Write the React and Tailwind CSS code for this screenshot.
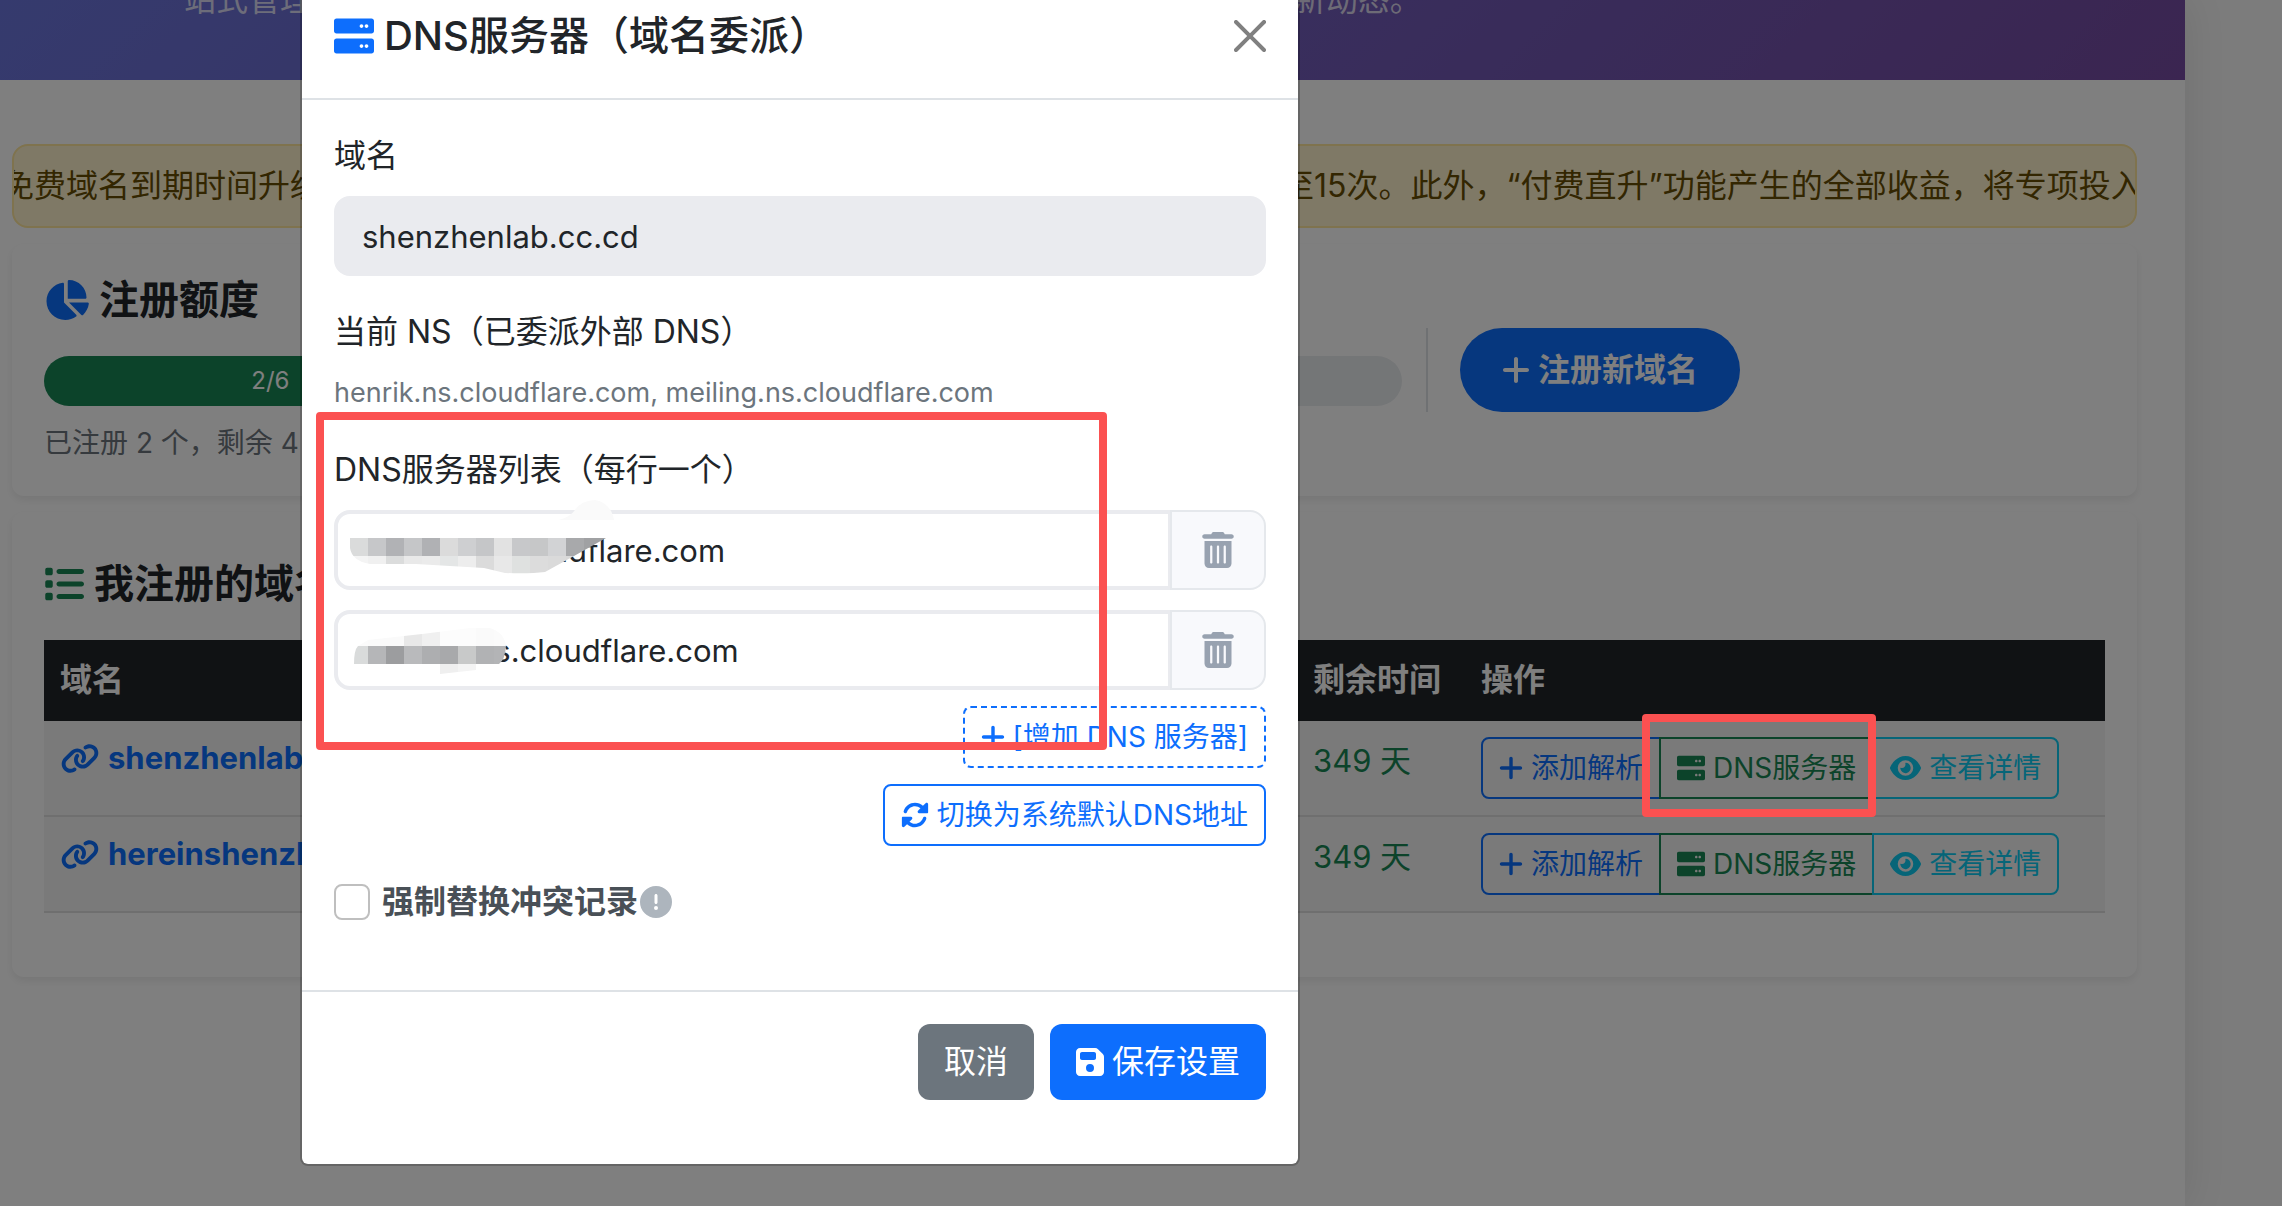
import React, { useState } from 'react';
import {
  FaChartPie,
  FaCircleExclamation,
  FaEye,
  FaFloppyDisk,
  FaLink,
  FaList,
  FaPlus,
  FaTrashCan,
} from 'react-icons/fa6';

const domains = [
  { name: 'shenzhenlab.cc.cd', remaining: '349 天' },
  { name: 'hereinshenzhen.cc.cd', remaining: '349 天' },
];

const quota = { used: 2, total: 6 };

// Pixelated strip over the first name server
const mosaicOne = {
  top: ['#dadbdb', '#c6c7c9', '#b1b2b5', '#c5c6c8', '#b0b1b4', '#dbdbdb', '#cecfd1', '#c5c6c8', '#e2e2e2', '#c7c8ca', '#c6c7c8', '#d2d3d5', '#a8a9ab', '#a0a1a3', '#a0a1a3'],
  bottom: ['#f4f4f4', '#f0f0f0', '#dbdcdc', '#e9e9e9', '#ebebeb', '#e4e6e6', '#ededed', '#dbdbdb', '#e8e8e8', '#dfe1e0', '#dcdcdc', '#dadada', '#d8d8d8'],
};

// Pixelated strip over the second name server
const mosaicTwo = {
  top: ['#fbfbfb', '#fafafa', '#fafafa', '#e8e8e8', '#f0f0f0', '#fcfcfc', '#fcfcfc', '#fafafa', '#fbfbfb'],
  middle: ['#d9dbdb', '#b5b6b8', '#9c9d9f', '#b9babc', '#adaeb0', '#a8a9ab', '#c8c9c9', '#b1b2b4', '#b3b4b6'],
};

const ServerIcon = ({ className }) => (
  <svg className={className} width="1em" height="1em" viewBox="0 0 512 512" fill="currentColor" aria-hidden="true">
    <path d="M480 288H32c-17.62 0-32 14.38-32 32v128c0 17.62 14.38 32 32 32h448c17.62 0 32-14.38 32-32V320c0-17.62-14.38-32-32-32zM352 408c-13.25 0-24-10.75-24-24s10.75-24 24-24 24 10.75 24 24-10.75 24-24 24zm64 0c-13.25 0-24-10.75-24-24s10.75-24 24-24 24 10.75 24 24-10.75 24-24 24zM480 32H32C14.38 32 0 46.38 0 64v128c0 17.62 14.38 32 32 32h448c17.62 0 32-14.38 32-32V64c0-17.62-14.38-32-32-32zM352 152c-13.25 0-24-10.75-24-24s10.75-24 24-24 24 10.75 24 24-10.75 24-24 24zm64 0c-13.25 0-24-10.75-24-24s10.75-24 24-24 24 10.75 24 24-10.75 24-24 24z" />
  </svg>
);

const RotateIcon = () => (
  <svg width="1em" height="1em" viewBox="0 0 512 512" fill="currentColor" aria-hidden="true">
    <path d="M449.9 39.96l-48.5 48.53C362.5 53.19 311.4 32 256 32C161.5 32 78.59 92.34 49.58 182.2c-5.438 16.81 3.797 34.88 20.61 40.28c16.97 5.5 34.86-3.812 40.3-20.59C130.9 138.5 189.4 96 256 96c37.96 0 73 14.18 100.2 37.8L311.1 178C295.1 194.8 306.8 223.4 330.4 224h146.9C487.7 223.7 496 215.3 496 204.9V59.04C496 34.99 466.9 22.95 449.9 39.96zM441.8 289.6c-16.94-5.438-34.88 3.812-40.3 20.59C381.1 373.5 322.6 416 256 416c-37.96 0-73-14.18-100.2-37.8L200 334C216.9 317.2 205.2 288.6 181.6 288H34.66C24.32 288.3 16 296.7 16 307.1v145.9c0 24.04 29.07 36.08 46.07 19.07l48.5-48.53C149.5 458.8 200.6 480 255.1 480c94.45 0 177.4-60.34 206.4-150.2C467.9 313 458.6 294.1 441.8 289.6z" />
  </svg>
);

const MosaicOne = () => (
  <svg className="pointer-events-none absolute -top-2.5 left-0" width="300" height="90" viewBox="0 0 300 90" aria-hidden="true">
    <clipPath id="mosaic-one">
      <path d="M16 38H272L240 56L211 72Q195 74 171 73L150 68L116 66L82 64H36Q18 61 16 48Z" />
    </clipPath>
    <path d="M225 20Q236 17 241 10Q248 0 261 0Q277 3 280 20Z" fill="#fafafa" />
    <g clipPath="url(#mosaic-one)">
      {mosaicOne.top.map((color, index) => (
        <rect key={index} x={16 + index * 18} y="38" width="18" height="18" fill={color} />
      ))}
      {mosaicOne.bottom.map((color, index) => (
        <rect key={index} x={16 + index * 18} y="56" width="18" height="18" fill={color} />
      ))}
    </g>
  </svg>
);

const MosaicTwo = () => (
  <svg className="pointer-events-none absolute -top-2.5 left-0" width="300" height="90" viewBox="0 0 300 90" aria-hidden="true">
    <clipPath id="mosaic-two">
      <path d="M20 64Q20 50 24 46L34 40L88 34L136 28H156Q170 32 172 46Q171 60 165 64L142 70L106 74V64Z" />
    </clipPath>
    <g clipPath="url(#mosaic-two)">
      {mosaicTwo.top.map((color, index) => (
        <rect key={index} x={16 + index * 18} y="28" width="18" height="18" fill={color} />
      ))}
      {mosaicTwo.middle.map((color, index) => (
        <rect key={index} x={16 + index * 18} y="46" width="18" height="18" fill={color} />
      ))}
      <rect x="106" y="64" width="18" height="10" fill="#efefef" />
      <rect x="124" y="64" width="18" height="10" fill="#f4f4f4" />
    </g>
  </svg>
);

const DomainRow = ({ domain }) => (
  <tr className="border-b-2 border-[#dedede] bg-[#f5f5f5] align-top">
    <td className="px-4 py-4">
      <a href="#domain" className="flex items-center gap-2 text-[31px] leading-[42px] font-bold text-[#0d6efd]">
        <FaLink className="w-10" />
        {domain.name}
      </a>
    </td>
    <td className="px-4 py-4 text-[31px] text-[#198754]">{domain.remaining}</td>
    <td className="px-4 py-4">
      <div className="flex text-[28px] leading-[42px]">
        <button className="flex items-center gap-2 rounded-l-lg border-2 border-[#0d6efd] px-4 py-2 text-[#0d6efd]">
          <FaPlus className="w-6" />
          添加解析
        </button>
        <button className="-ml-0.5 flex items-center gap-2 border-2 border-[#198754] px-4 py-2 text-[#198754]">
          <ServerIcon />
          DNS服务器
        </button>
        <button className="-ml-0.5 flex items-center gap-2 rounded-r-lg border-2 border-[#0dcaf0] px-4 py-2 text-[#0dcaf0]">
          <FaEye className="w-[31px]" />
          查看详情
        </button>
      </div>
    </td>
  </tr>
);

const ServerInput = ({ id, value, onChange, children }) => (
  <div className="relative mb-5 flex">
    <input
      id={id}
      type="text"
      aria-label="DNS服务器"
      className="h-20 min-w-0 flex-1 rounded-l-2xl border-4 border-[#eaebef] bg-white px-6 text-[31px] outline-none"
      value={value}
      onChange={onChange}
    />
    {children}
    <button
      aria-label="删除"
      className="-ml-0.5 flex h-20 w-24 items-center justify-center rounded-r-2xl border-2 border-[#e5e8ec] bg-[#f8f9fc] text-4xl text-[#98a2b0]"
    >
      <FaTrashCan />
    </button>
  </div>
);

const DnsModal = () => {
  const [servers, setServers] = useState(['henrik.ns.cloudflare.com', 'meiling.ns.cloudflare.com']);
  const [force, setForce] = useState(false);

  const updateServer = (index, value) => {
    const updated = [...servers];
    updated[index] = value;
    setServers(updated);
  };

  return (
    <div
      role="dialog"
      aria-labelledby="dns-title"
      className="w-[1000px] max-w-full rounded-b-lg border-2 border-t-0 border-black/20 bg-white bg-clip-padding"
    >
      <div className="flex items-center justify-between border-b-2 border-[#dee2e6] px-8 pt-1.5 pb-8">
        <h5 id="dns-title" className="flex items-center gap-2.5 text-[40px] leading-[60px] font-medium">
          <ServerIcon className="text-[#0d6efd]" />
          DNS服务器（域名委派）
        </h5>
        <button aria-label="关闭" className="text-[#808080]">
          <svg className="size-8" viewBox="0 0 16 16" fill="currentColor">
            <path d="M.293.293a1 1 0 0 1 1.414 0L8 6.586 14.293.293a1 1 0 1 1 1.414 1.414L9.414 8l6.293 6.293a1 1 0 0 1-1.414 1.414L8 9.414l-6.293 6.293a1 1 0 0 1-1.414-1.414L6.586 8 .293 1.707a1 1 0 0 1 0-1.414z" />
          </svg>
        </button>
      </div>

      <div className="p-8">
        <label htmlFor="domain" className="mb-4 block">
          域名
        </label>
        <input
          id="domain"
          type="text"
          readOnly
          className="mb-8 block h-20 w-full rounded-2xl border-4 border-[#eaebef] bg-[#eaebef] px-6 text-[31px] outline-none"
          value="shenzhenlab.cc.cd"
        />

        <p className="mb-4">当前 NS（已委派外部 DNS）</p>
        <p className="mb-8 text-[27px] leading-[42px] text-[#6c757d]">
          henrik.ns.cloudflare.com, meiling.ns.cloudflare.com
        </p>

        <label htmlFor="ns-0" className="mb-4 block">
          DNS服务器列表（每行一个）
        </label>
        <ServerInput id="ns-0" value={servers[0]} onChange={(e) => updateServer(0, e.target.value)}>
          <MosaicOne />
        </ServerInput>
        <ServerInput id="ns-1" value={servers[1]} onChange={(e) => updateServer(1, e.target.value)}>
          <MosaicTwo />
        </ServerInput>

        <div className="-mt-1 flex flex-col items-end gap-4 text-[28px] leading-[42px] text-[#0d6efd]">
          <button className="flex items-center gap-2 rounded-lg border-2 border-dashed border-[#0d6efd] px-4 py-2">
            <FaPlus className="w-6" />
            [增加 DNS 服务器]
          </button>
          <button className="flex items-center gap-2 rounded-lg border-2 border-[#0d6efd] px-4 py-2">
            <RotateIcon />
            切换为系统默认DNS地址
          </button>
        </div>

        <div className="mt-8 mb-8 flex items-center">
          <input
            id="force"
            type="checkbox"
            className="mr-3 size-9 appearance-none rounded-lg border-2 border-[#bfbfbf] bg-white"
            checked={force}
            onChange={(e) => setForce(e.target.checked)}
          />
          <label htmlFor="force" className="font-bold text-[#495057]">
            强制替换冲突记录
          </label>
          <FaCircleExclamation className="ml-0.5 text-[#adb5bd]" />
        </div>
      </div>

      <div className="flex justify-end gap-4 border-t-2 border-[#dee2e6] px-8 pt-8 pb-16">
        <button className="rounded-xl bg-[#6c757d] px-[26px] py-3.5 text-white">取消</button>
        <button className="flex items-center gap-2 rounded-xl bg-[#0d6efd] px-[26px] py-3.5 text-white">
          <FaFloppyDisk className="w-7" />
          保存设置
        </button>
      </div>
    </div>
  );
};

const App = () => {
  return (
    <div className="relative min-h-screen overflow-hidden bg-[#f8f8f8] font-[Inter,'Noto_Sans_CJK_SC',sans-serif] text-[32px] leading-[48px] text-[#212529]">
      <main className="mr-[97px] min-h-screen bg-white shadow-[0_0_40px_rgba(0,0,0,0.1)]">
        <header className="h-20 overflow-hidden bg-[linear-gradient(135deg,#6b75dc,#764ba2)] px-[152px]">
          <p className="-mt-6 whitespace-nowrap text-white/75">
            一站式管理您的免费域名，轻松配置 DNS 解析记录，随时查看公告与社区活动最新动态。
          </p>
        </header>

        <div className="flex flex-col gap-4 pt-16 pr-12 pl-3">
          <div className="overflow-hidden rounded-2xl border-2 border-[#ffe69c] bg-[#fff3cd] py-4 whitespace-nowrap text-[#664d03]">
            <p className="-ml-3">
              免费域名到期时间升级为每年免费续期，续期操作简单快捷，并邀请好友奖励次数上限提升至15次。此外，“付费直升”功能产生的全部收益，将专项投入
            </p>
          </div>

          {/* Quota */}
          <section className="rounded-xl bg-white p-8 shadow-[0_4px_8px_rgba(0,0,0,0.075)]">
            <div className="-mx-6 flex items-center">
              <div className="w-2/3 px-6">
                <h5 className="mb-8 flex items-center gap-2.5 text-[40px] leading-[48px] font-semibold">
                  <FaChartPie className="w-[45px] text-[#0d6efd]" />
                  注册额度
                </h5>
                <div className="mb-4 h-[50px] overflow-hidden rounded-full bg-[#e9ecef]">
                  <div
                    className="flex h-full items-center justify-center bg-[#198754] text-2xl text-white"
                    style={{ width: `${(quota.used / quota.total) * 100}%` }}
                  >
                    {quota.used}/{quota.total}
                  </div>
                </div>
                <p className="text-[28px] leading-[42px] text-[#6c757d]">已注册 2 个，剩余 4 个</p>
              </div>
              <div className="border-l-2 border-[#dee2e6] pl-8">
                <button className="flex items-center gap-2 rounded-full bg-[#0d6efd] px-[42px] py-[18px] font-bold text-white">
                  <FaPlus className="w-7" />
                  注册新域名
                </button>
              </div>
            </div>
          </section>

          {/* Domain list */}
          <section className="rounded-xl bg-white p-8 shadow-[0_4px_8px_rgba(0,0,0,0.075)]">
            <h5 className="mt-4 mb-8 flex items-center gap-2.5 text-[40px] leading-[48px] font-semibold">
              <FaList className="text-[#198754]" />
              我注册的域名
            </h5>
            <table className="mb-8 w-full table-fixed border-collapse text-left">
              <thead>
                <tr className="border-b border-[#212529] bg-[#212529] text-white">
                  <th className="px-4 py-4 font-bold">域名</th>
                  <th className="w-[168px] px-4 py-4 font-bold whitespace-nowrap">剩余时间</th>
                  <th className="w-[640px] px-4 py-4 font-bold">操作</th>
                </tr>
              </thead>
              <tbody>
                {domains.map((domain) => (
                  <DomainRow key={domain.name} domain={domain} />
                ))}
              </tbody>
            </table>
          </section>
        </div>
      </main>

      {/* Backdrop and dialog */}
      <div className="absolute inset-0 bg-black/50 pl-[300px]">
        <DnsModal />
      </div>

      {/* Highlight boxes */}
      <div className="pointer-events-none absolute top-[412px] left-[316px] h-[338px] w-[791px] rounded border-8 border-[#fb5151]" />
      <div className="pointer-events-none absolute top-[714px] left-[1642px] h-[103px] w-[234px] rounded border-8 border-[#fb5151]" />
    </div>
  );
};

export default App;
